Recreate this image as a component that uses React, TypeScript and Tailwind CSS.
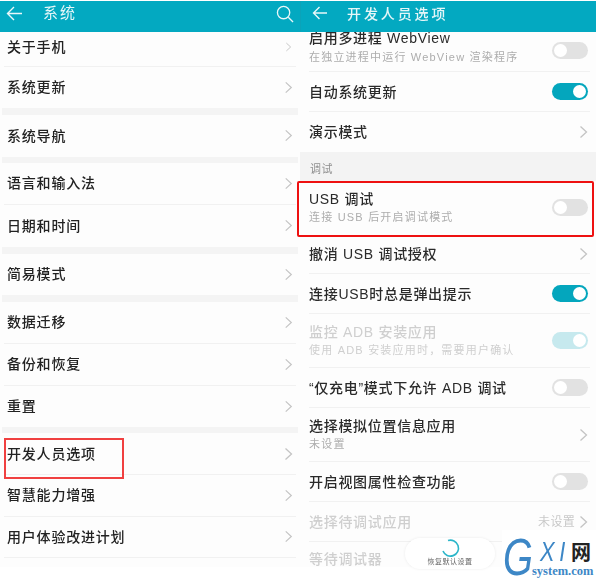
const F = "[font-family:'Liberation_Sans','Noto_Sans_CJK_SC',sans-serif]";

function Chevron({ className = "" }: { className?: string }) {
  return (
    <svg width="9" height="14" viewBox="0 0 9 14" fill="none" stroke="#c4c4c4" strokeWidth="1.3" className={className}>
      <path d="M1.5 1.5 L7.5 7 L1.5 12.5" />
    </svg>
  );
}

function Toggle({ state }: { state: "on" | "off" | "dim" }) {
  const bg = state === "on" ? "bg-[#04a6bd] justify-end" : state === "dim" ? "bg-[#c6e9ee] justify-end" : "bg-[#e2e2e2] justify-start";
  return (
    <div className={`flex h-[17px] w-[36px] items-center rounded-full px-[2px] ${bg}`}>
      <div className="h-[13px] w-[13px] rounded-full bg-white" />
    </div>
  );
}

function LeftRow({ label, h, up = "pb-[1px]" }: { label: string; h: string; up?: string }) {
  return (
    <div className={`flex items-center justify-between pl-[7px] pr-[6px] ${h}`}>
      <span className={`text-[14px] leading-none tracking-[0.8px] font-medium text-[#222] ${up}`}>{label}</span>
      <Chevron className={`mr-[1px] ${up}`} />
    </div>
  );
}

function Sep() {
  return <div className="mx-[4px] h-[1px] bg-[#f1f1f1]" />;
}
function Gap({ h = "h-[7px]" }: { h?: string }) {
  return <div className={`mx-[2px] ${h} bg-[#f4f4f4]`} />;
}

function RightRow({ title, sub, right, h, dim, clip }: { title: string; sub?: string; right?: React.ReactNode; h: string; dim?: boolean; clip?: boolean }) {
  return (
    <div className={`flex shrink-0 items-center justify-between overflow-hidden pl-[9px] pr-[8px] ${h}`}>
      <div className={`flex flex-col ${clip ? "-mt-[10px] gap-[5px]" : "gap-[4px]"}`}>
        <span className={`text-[14px] leading-[16px] tracking-[0.7px] font-medium ${dim ? "text-[#cfcfcf]" : "text-[#2a2a2a]"}`}>{title}</span>
        {sub && <span className={`text-[11px] leading-[13px] tracking-[1.2px] ${dim ? "text-[#cfcfcf]" : "text-[#adadad]"}`}>{sub}</span>}
      </div>
      <div className={clip ? "-mt-[2px]" : ""}>{right}</div>
    </div>
  );
}

function RSep() {
  return <div className="ml-[9px] mr-[6px] h-[1px] shrink-0 bg-[#f1f1f1]" />;
}

export default function App() {
  return (
    <div className={`relative flex h-[579px] w-[600px] overflow-hidden bg-white ${F}`}>
      <div className="mt-[1px] flex h-[566px] w-[300px] flex-col bg-[#fdfdfd] blur-[0.5px]">
        <div className="flex h-[31px] shrink-0 items-start bg-[#03a9c1] pl-[6px] pr-[6px] pt-[4px]">
          <svg width="17" height="15" viewBox="0 0 17 15" fill="none" stroke="#e9f7f9" strokeWidth="1.4" className="mt-[1px]"><path d="M16 7.5 H1.5 M8 1 L1.5 7.5 L8 14" /></svg>
          <span className="ml-[20px] flex-1 text-[15px] leading-[16px] tracking-[2px] text-[#e4f6f8]">系统</span>
          <svg width="18" height="18" viewBox="0 0 19 19" fill="none" stroke="#e9f7f9" strokeWidth="1.4"><circle cx="8" cy="8" r="6.5" /><path d="M13 13 L18 18" /></svg>
        </div>
        <LeftRow label="关于手机" h="h-[34px]" up="pb-[4px]" />
        <Sep />
        <LeftRow label="系统更新" h="h-[41px]" />
        <Gap />
        <LeftRow label="系统导航" h="h-[42px]" />
        <Gap h="h-[6px]" />
        <LeftRow label="语言和输入法" h="h-[41px]" />
        <Sep />
        <LeftRow label="日期和时间" h="h-[42px]" />
        <Gap />
        <LeftRow label="简易模式" h="h-[41px]" />
        <Gap />
        <LeftRow label="数据迁移" h="h-[41px]" />
        <Sep />
        <LeftRow label="备份和恢复" h="h-[41px]" />
        <Sep />
        <LeftRow label="重置" h="h-[41px]" />
        <Gap h="h-[6px]" />
        <LeftRow label="开发人员选项" h="h-[41px]" up="" />
        <Sep />
        <LeftRow label="智慧能力增强" h="h-[41px]" />
        <Sep />
        <LeftRow label="用户体验改进计划" h="h-[40px]" />
        <Sep />
      </div>

      <div className="mt-[1px] flex h-[566px] w-[296px] flex-col overflow-hidden bg-[#fdfdfd] blur-[0.5px]">
        <div className="flex h-[31px] shrink-0 items-start border-l border-[#0ba3b9] bg-[#03a9c1] pl-[11px] pt-[5px]">
          <svg width="16" height="14" viewBox="0 0 16 14" fill="none" stroke="#e9f7f9" strokeWidth="1.4"><path d="M15 7 H1.5 M7.5 1 L1.5 7 L7.5 13" /></svg>
          <span className="ml-[19px] text-[14px] leading-[16px] tracking-[2.9px] font-medium text-[#e4f6f8]">开发人员选项</span>
        </div>
        <RightRow clip title="启用多进程 WebView" sub="在独立进程中运行 WebView 渲染程序" h="h-[39px]" right={<Toggle state="off" />} />
        <RSep />
        <RightRow title="自动系统更新" h="h-[39px]" right={<Toggle state="on" />} />
        <RSep />
        <RightRow title="演示模式" h="h-[40px]" right={<Chevron />} />
        <div className="flex h-[29px] shrink-0 items-center bg-[#f3f3f3] pl-[10px] pt-[5px] text-[11px] tracking-[0.6px] text-[#8f8f8f]">调试</div>
        <RightRow title="USB 调试" sub="连接 USB 后开启调试模式" h="h-[53px]" right={<Toggle state="off" />} />
        <RightRow title="撤消 USB 调试授权" h="h-[39px]" right={<Chevron />} />
        <RSep />
        <RightRow title="连接USB时总是弹出提示" h="h-[39px]" right={<Toggle state="on" />} />
        <RSep />
        <RightRow dim title="监控 ADB 安装应用" sub="使用 ADB 安装应用时，需要用户确认" h="h-[53px]" right={<Toggle state="dim" />} />
        <RSep />
        <RightRow title="“仅充电”模式下允许 ADB 调试" h="h-[39px]" right={<Toggle state="off" />} />
        <RSep />
        <RightRow title="选择模拟位置信息应用" sub="未设置" h="h-[53px]" right={<Chevron />} />
        <RSep />
        <RightRow title="开启视图属性检查功能" h="h-[39px]" right={<Toggle state="off" />} />
        <RSep />
        <RightRow dim title="选择待调试应用" h="h-[39px]" right={
          <div className="flex items-center gap-[4px]">
            <span className="text-[12px] tracking-[0.3px] text-[#c9c9c9]">未设置</span>
            <Chevron />
          </div>
        } />
        <RSep />
        <div className="h-[25px] shrink-0 pl-[9px] pt-[9px] text-[14px] leading-[16px] tracking-[0.7px] font-medium text-[#cfcfcf]">等待调试器</div>
      </div>

      {/* selection frames */}
      <div className="absolute left-[4px] top-[438px] h-[41px] w-[120px] border-2 border-[#f04040]" />
      <div className="absolute left-[297px] top-[181px] h-[56px] w-[297px] rounded-[2px] border-[2.5px] border-[#ee1111]" />

      {/* restore-defaults pill */}
      <div className="absolute left-[405px] top-[538px] flex h-[31px] w-[90px] flex-col items-center rounded-full bg-white shadow-[0_0_3px_rgba(0,0,0,0.08)] blur-[0.3px]">
        <svg width="20" height="20" viewBox="0 0 20 20" fill="none" stroke="#2cb6c9" strokeWidth="1.6" className="-ml-[1px]"><path d="M8 2.5 A8 8 0 1 1 3 13" /></svg>
        <span className="text-[7px] leading-[8px] tracking-[0.5px] text-[#666]">恢复默认设置</span>
      </div>

      {/* watermark */}
      <div className="absolute bottom-0 left-[502px] h-[49px] w-[98px] bg-white">
        <span className="absolute left-[1px] top-[4px] origin-left scale-x-[0.74] text-[52px] leading-[46px] italic text-[#3d87c6]">G</span>
        <span className="absolute left-[38px] top-[9px] origin-left scale-x-[0.78] text-[28px] leading-[26px] italic tracking-[6px] text-[#3d87c6]">XI</span>
        <span className="absolute left-[69px] top-[9px] text-[20px] leading-[25px] font-bold text-[#222] [font-family:'Noto_Sans_CJK_SC',sans-serif]">网</span>
        <span className="absolute left-[30px] top-[35px] text-[12.5px] leading-[12px] font-bold text-[#3d87c6] [font-family:'Liberation_Serif',serif]">system.com</span>
      </div>
    </div>
  );
}
